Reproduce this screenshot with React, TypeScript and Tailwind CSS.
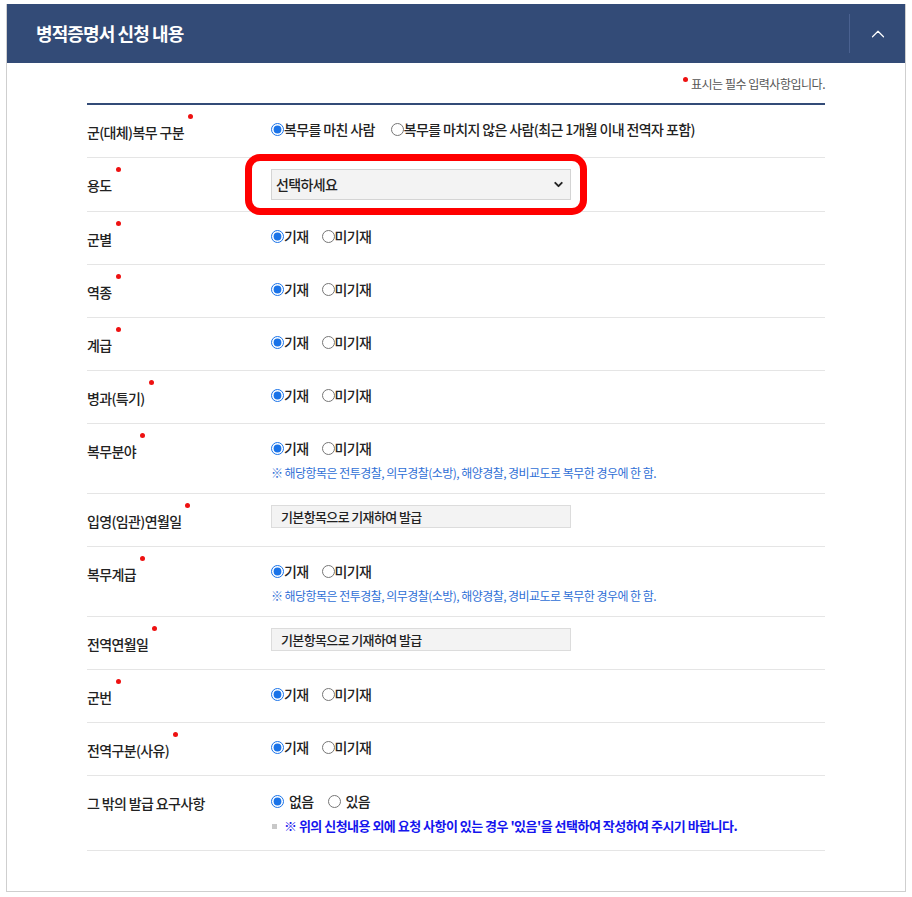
import { ChevronDown, ChevronUp } from 'lucide-react';

interface FieldRow {
  label: string;
  kind: 'radio' | 'select' | 'fixed';
  options?: string[];
  note?: boolean;
}

const rows: FieldRow[] = [
  { label: '군(대체)복무 구분', kind: 'radio', options: ['복무를 마친 사람', '복무를 마치지 않은 사람(최근 1개월 이내 전역자 포함)'] },
  { label: '용도', kind: 'select' },
  { label: '군별', kind: 'radio' },
  { label: '역종', kind: 'radio' },
  { label: '계급', kind: 'radio' },
  { label: '병과(특기)', kind: 'radio' },
  { label: '복무분야', kind: 'radio', note: true },
  { label: '입영(임관)연월일', kind: 'fixed' },
  { label: '복무계급', kind: 'radio', note: true },
  { label: '전역연월일', kind: 'fixed' },
  { label: '군번', kind: 'radio' },
  { label: '전역구분(사유)', kind: 'radio' },
];

function Radio({ checked, label, spaced }: { checked: boolean; label: string; spaced?: boolean }) {
  return (
    <label className="flex items-center">
      <input type="radio" defaultChecked={checked} className="w-[13px] h-[13px] accent-[#1a73e8]" />
      <span className={spaced ? 'ml-[5px]' : 'ml-0'}>{label}</span>
    </label>
  );
}

function Label({ text }: { text: string }) {
  return (
    <span className="relative">
      {text}
      <span className="absolute left-full ml-[4px] -top-[8px] w-[5px] h-[5px] rounded-full bg-[#ee1111]" />
    </span>
  );
}

export default function App() {
  return (
    <div className="w-[912px] min-h-[897px] bg-white pt-[4px] px-[6px] text-[#222] font-['Noto_Sans_CJK_KR','Noto_Sans',sans-serif]">
      <section className="border border-[#cfcfcf] border-t-0 pb-[40px]">
        <header className="h-[59px] bg-[#334b77] flex items-center justify-between">
          <h2 className="pl-[29px] text-[18px] font-bold text-white tracking-[-0.05em]">병적증명서 신청 내용</h2>
          <div className="flex items-center h-full">
            <div className="w-px h-[39px] bg-[#4a6190]" />
            <button className="w-[55px] h-full flex items-center justify-center text-white">
              <ChevronUp className="w-[22px] h-[22px]" strokeWidth={1.3} />
            </button>
          </div>
        </header>

        <div className="ml-[80px] w-[738px]">
          <p className="pt-[13px] text-right text-[12px] leading-[16px] text-[#555] tracking-[-0.04em]">
            <span className="relative inline-block w-[8px]">
              <span className="absolute left-0 -top-[12px] w-[5px] h-[5px] rounded-full bg-[#ee1111]" />
            </span>
            표시는 필수 입력사항입니다.
          </p>

          <div className="mt-[11px] border-t-2 border-[#334b77] text-[14px] font-medium tracking-[-0.045em]">
            {rows.map((row) => (
              <div key={row.label} className="flex border-b border-[#e5e5e5]">
                <div className="w-[184px] pt-[17px] leading-[20px]">
                  <Label text={row.label} />
                </div>
                <div className="flex-1">
                  {row.kind === 'radio' && (
                    <div className={row.note ? 'pt-[14px] pb-[11px]' : 'pt-[14px] pb-[18px]'}>
                      <div className={`flex items-center leading-[20px] ${row.options ? 'gap-[16px]' : 'gap-[13px]'}`}>
                        {(row.options ?? ['기재', '미기재']).map((o, i) => (
                          <Radio key={o} checked={i === 0} label={o} />
                        ))}
                      </div>
                      {row.note && (
                        <p className="mt-[6px] text-[12px] leading-[18px] font-normal text-[#2f6fd6] tracking-[-0.045em]">
                          ※ 해당항목은 전투경찰, 의무경찰(소방), 해양경찰, 경비교도로 복무한 경우에 한 함.
                        </p>
                      )}
                    </div>
                  )}
                  {row.kind === 'select' && (
                    <div className="relative py-[11px]">
                      <div className="w-[300px] h-[31px] bg-[#f3f3f3] border border-[#d4d4d4] flex items-center justify-between pl-[4px] pr-[5px]">
                        <span>선택하세요</span>
                        <ChevronDown className="w-[13px] h-[13px] text-[#222]" strokeWidth={3.5} />
                      </div>
                      <div className="absolute -left-[26px] -top-[4px] w-[342px] h-[61px] border-[7px] border-[#ff0000] rounded-[15px]" />
                    </div>
                  )}
                  {row.kind === 'fixed' && (
                    <div className="pt-[11px] pb-[18px]">
                      <div className="w-[300px] h-[23px] bg-[#f3f3f3] border border-[#dcdcdc] flex items-center pl-[9px] text-[13px]">
                        기본항목으로 기재하여 발급
                      </div>
                    </div>
                  )}
                </div>
              </div>
            ))}

            <div className="flex border-b border-[#e5e5e5]">
              <div className="w-[184px] pt-[17px] leading-[20px]">그 밖의 발급 요구사항</div>
              <div className="flex-1 pt-[15px] pb-[14px]">
                <div className="flex items-center leading-[20px] gap-[14px]">
                  <Radio checked label="없음" spaced />
                  <Radio checked={false} label="있음" spaced />
                </div>
                <p className="mt-[5px] flex items-center text-[13px] leading-[20px] font-bold text-[#1515ee] tracking-[-0.04em]">
                  <span className="w-[5px] h-[5px] bg-[#c8c8c8] mr-[7px] ml-[1px]" />
                  ※ 위의 신청내용 외에 요청 사항이 있는 경우 '있음'을 선택하여 작성하여 주시기 바랍니다.
                </p>
              </div>
            </div>
          </div>
        </div>
      </section>
    </div>
  );
}
